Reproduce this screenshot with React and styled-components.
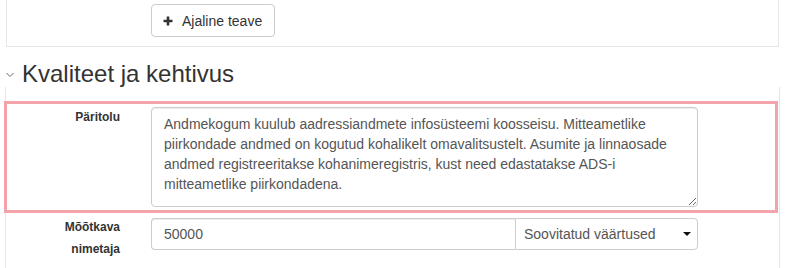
import React from "react";
import styled, { createGlobalStyle } from "styled-components";

const Global = createGlobalStyle`
  html, body { margin: 0; padding: 0; background: #fff; overflow: hidden; }
  body { font-family: "Liberation Sans", Arial, sans-serif; color: #333; font-size: 14px; }
  * { box-sizing: border-box; }
`;

const Page = styled.div`
  width: 787px;
  height: 268px;
  overflow: hidden;
`;

const TopPanel = styled.div`
  margin-left: 6px;
  width: 773px;
  border: 1px solid #e6e6e6;
  border-top: none;
  padding: 4px 0 9px 144px;
`;

const Button = styled.button`
  display: inline-flex;
  align-items: center;
  height: 33px;
  padding: 0 12px 0 11px;
  border: 1px solid #ccc;
  border-radius: 4px;
  background: #fff;
  color: #333;
  font-family: "Liberation Sans", Arial, sans-serif;
  font-size: 14px;
  cursor: pointer;
`;

const PlusIcon = styled.svg`
  width: 10px;
  height: 10px;
  margin-right: 9px;
  flex: none;
`;

const Heading = styled.h3`
  display: flex;
  align-items: center;
  gap: 8px;
  margin: 14px 0 0 6px;
  height: 26px;
  font-size: 24px;
  line-height: 26px;
  font-weight: 400;
  color: #333;
`;

const Chevron = styled.svg`
  width: 8px;
  height: 6px;
  flex: none;
  margin-top: 2px;
`;

const Fieldset = styled.div`
  margin-left: 5px;
  width: 775px;
  border-left: 1px solid #e6e6e6;
  border-right: 1px solid #e6e6e6;
  padding-top: 14px;
  height: 200px;
`;

const Highlight = styled.div`
  display: flex;
  align-items: flex-start;
  margin: 0 1px 0 -2px;
  border: 3px solid #f4a3aa;
  padding: 3px 0;
`;

const Row = styled.div`
  display: flex;
  align-items: flex-start;
  margin-top: ${(p) => p.$top || 0}px;
`;

const Label = styled.label`
  flex: none;
  width: ${(p) => p.$width}px;
  padding-right: 31px;
  margin-top: ${(p) => p.$offset}px;
  text-align: right;
  font-size: 12px;
  font-weight: 700;
  line-height: 22px;
  color: #333;
`;

const TextArea = styled.textarea`
  width: 547px;
  height: 100px;
  padding: 6px 12px;
  border: 1px solid #ccc;
  border-radius: 4px;
  box-shadow: inset 0 1px 1px rgba(0, 0, 0, 0.075);
  font-family: "Liberation Sans", Arial, sans-serif;
  font-size: 14px;
  line-height: 20px;
  color: #555;
  outline: none;
  overflow: hidden;
`;

const InputGroup = styled.div`
  display: flex;
  width: 547px;
  height: 32px;
`;

const Input = styled.input`
  width: 364px;
  height: 32px;
  padding: 6px 12px;
  border: 1px solid #ccc;
  border-right: none;
  border-radius: 4px 0 0 4px;
  box-shadow: inset 0 1px 1px rgba(0, 0, 0, 0.075);
  font-family: "Liberation Sans", Arial, sans-serif;
  font-size: 14px;
  line-height: 20px;
  color: #555;
  outline: none;
`;

const Dropdown = styled.button`
  flex: 1;
  display: flex;
  align-items: center;
  justify-content: space-between;
  height: 32px;
  padding: 0 6px 0 8px;
  border: 1px solid #ccc;
  border-radius: 0 4px 4px 0;
  background: #fff;
  font-family: "Liberation Sans", Arial, sans-serif;
  font-size: 14px;
  color: #555;
  cursor: pointer;
`;

const Caret = styled.svg`
  width: 8px;
  height: 4px;
  flex: none;
`;

const text =
  "Andmekogum kuulub aadressiandmete infosüsteemi koosseisu. Mitteametlike piirkondade andmed on kogutud kohalikelt omavalitsustelt. Asumite ja linnaosade andmed registreeritakse kohanimeregistris, kust need edastatakse ADS-i mitteametlike piirkondadena.";

export default function App() {
  return (
    <Page>
      <Global />
      <TopPanel>
        <Button type="button">
          <PlusIcon viewBox="0 0 10 10">
            <path d="M5 0.5V9.5M0.5 5H9.5" stroke="#333" strokeWidth="2.6" />
          </PlusIcon>
          Ajaline teave
        </Button>
      </TopPanel>
      <Heading>
        <Chevron viewBox="0 0 8 6">
          <path d="M0.5 1L4 4.5L7.5 1" fill="none" stroke="#666" strokeWidth="1" />
        </Chevron>
        Kvaliteet ja kehtivus
      </Heading>
      <Fieldset>
        <Highlight>
          <Label $width={144} $offset={-1}>Päritolu</Label>
          <TextArea defaultValue={text} />
        </Highlight>
        <Row $top={5}>
          <Label $width={145} $offset={-2}>
            Mõõtkava
            <br />
            nimetaja
          </Label>
          <InputGroup>
            <Input defaultValue="50000" />
            <Dropdown type="button">
              Soovitatud väärtused
              <Caret viewBox="0 0 8 4">
                <path d="M0 0H8L4 4Z" fill="#111" />
              </Caret>
            </Dropdown>
          </InputGroup>
        </Row>
      </Fieldset>
    </Page>
  );
}
